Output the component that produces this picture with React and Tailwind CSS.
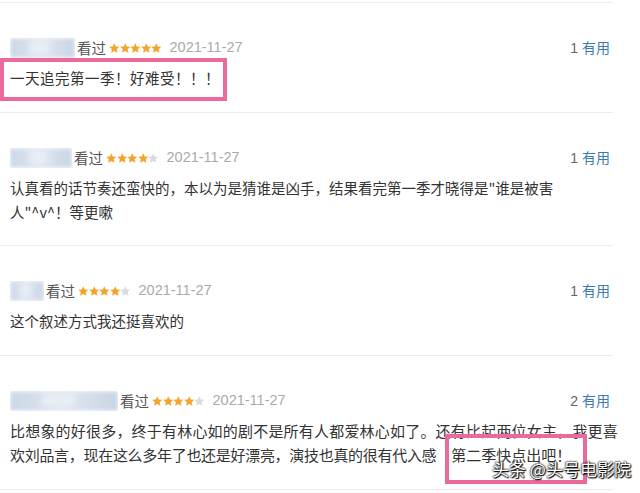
import React from 'react'

const font = { fontFamily: '"Microsoft YaHei", "Noto Sans CJK SC", "Liberation Sans", sans-serif' }

function Star({ on }) {
  return (
    <svg className="w-[10.5px] h-[10.5px]" viewBox="0 0 24 24">
      <path
        d="M12 0.5l3.4 7.3 8.1.9-6 5.5 1.7 8L12 18.2l-7.2 4 1.7-8-6-5.5 8.1-.9z"
        fill={on ? '#f4a42c' : '#dcdcdc'}
      />
    </svg>
  )
}

function Blur({ width }) {
  return (
    <div className="relative h-[20px] overflow-hidden" style={{ width }}>
      <div className="absolute inset-0 bg-gradient-to-r from-[#cbd8e8] via-[#dfe6f0] to-[#c9d5e5] blur-[2px]"></div>
      <div className="absolute left-[30%] top-[2px] w-[30%] h-[14px] bg-[#e9eef5] blur-[3px]"></div>
    </div>
  )
}

function Header({ blur, stars, useful }) {
  return (
    <div className="flex items-center h-6">
      <Blur width={blur} />
      <span className="text-[14.5px] text-[#555] ml-[2px]">看过</span>
      <div className="flex ml-[3px]">
        {[0, 1, 2, 3, 4].map(i => <Star key={i} on={i < stars} />)}
      </div>
      <span className="text-[14.5px] text-[#aaa] ml-[8px]" style={{ fontFamily: '"Liberation Sans", sans-serif' }}>2021-11-27</span>
      <span className="ml-auto text-[14px]">
        <span className="text-[#666]" style={{ fontFamily: '"Liberation Sans", sans-serif' }}>{useful} </span>
        <span className="text-[#3b7bb5]">有用</span>
      </span>
    </div>
  )
}

export default function App() {
  return (
    <div className="w-[640px] h-[493px] bg-white overflow-hidden relative" style={font}>
      <div className="w-[613px] mt-[2px] border-t border-[#ececec]">
        {/* comment 1 */}
        <div className="pl-[10px] pr-[3px] pt-[33px] pb-[22px] border-b border-[#ececec]">
          <Header blur={65} stars={5} useful={1} />
          <div className="mt-[6px] leading-6 text-[14.5px] tracking-[0.5px] text-[#333] relative">
            一天追完第一季！好难受！！！
            <div className="absolute left-[-10px] top-[-8px] w-[227px] h-[43px] border-[4px] border-[#e96a9b]"></div>
          </div>
        </div>

        {/* comment 2 */}
        <div className="pl-[10px] pr-[3px] pt-[33px] pb-[21px] border-b border-[#ececec]">
          <Header blur={62} stars={4} useful={1} />
          <div className="mt-[6px] leading-6 text-[14.5px] text-[#333] whitespace-nowrap">
            <div>认真看的话节奏还蛮快的，本以为是猜谁是凶手，结果看完第一季才晓得是"谁是被害</div>
            <div>人"^v^！等更嗽</div>
          </div>
        </div>

        {/* comment 3 */}
        <div className="pl-[10px] pr-[3px] pt-[33px] pb-[22px] border-b border-[#ececec]">
          <Header blur={34} stars={4} useful={1} />
          <div className="mt-[6px] leading-6 text-[14.5px] text-[#333]">
            这个叙述方式我还挺喜欢的
          </div>
        </div>

        {/* comment 4 */}
        <div className="pl-[10px] pr-[3px] pt-[33px] pb-[22px] border-b border-[#ececec]">
          <Header blur={108} stars={4} useful={2} />
          <div className="mt-[6px] leading-6 text-[15px] text-[#333] whitespace-nowrap">
            <div className="tracking-[0.2px]">比想象的好很多，终于有林心如的剧不是所有人都爱林心如了。还有比起两位女主，我更喜</div>
            <div className="flex">
              <span className="tracking-[-0.3px]">欢刘品言，现在这么多年了也还是好漂亮，演技也真的很有代入感</span>
              <span className="relative ml-[15px]">
                第二季快点出吧！
                <span className="absolute left-[-6px] top-[-9px] w-[142px] h-[50px] border-[4px] border-[#e96a9b]"></span>
              </span>
            </div>
          </div>
        </div>
      </div>

      <div className="absolute left-[492px] top-[459px] text-[17px] leading-5 text-white [text-shadow:0_0_2px_#000,0_0_2px_#000,1px_1px_1px_#000]">
        头条 @头号电影院
      </div>
    </div>
  )
}
